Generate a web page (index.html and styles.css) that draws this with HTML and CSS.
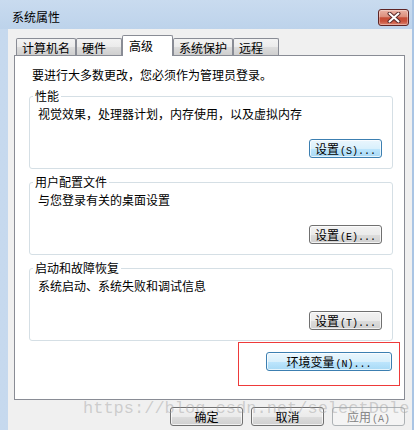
FILE: index.html
```html
<!DOCTYPE html>
<html lang="zh-CN">
<head>
<meta charset="utf-8">
<title>系统属性</title>
<link rel="stylesheet" href="styles.css">
</head>
<body>
<div class="window">
  <div class="titlebar">
    <span class="title">系统属性</span>
    <div class="close">
      <svg width="14" height="11" viewBox="0 0 14 11">
        <path d="M2.5 1.5 L11.5 9.5 M11.5 1.5 L2.5 9.5" stroke="#5a2a2a" stroke-width="4" stroke-linecap="round" fill="none"/>
        <path d="M2.5 1.5 L11.5 9.5 M11.5 1.5 L2.5 9.5" stroke="#ffffff" stroke-width="2" stroke-linecap="round" fill="none"/>
      </svg>
    </div>
  </div>
  <div class="client">
    <div class="tabs">
      <div class="tab">计算机名</div>
      <div class="tab">硬件</div>
      <div class="tab active">高级</div>
      <div class="tab">系统保护</div>
      <div class="tab">远程</div>
    </div>
    <div class="panel">
      <p class="intro">要进行大多数更改，您必须作为管理员登录。</p>
      <fieldset class="group">
        <legend>性能</legend>
        <p class="desc">视觉效果，处理器计划，内存使用，以及虚拟内存</p>
        <div class="actions"><div class="btn hot">设置<span class="lat">(S)...</span></div></div>
      </fieldset>
      <fieldset class="group">
        <legend>用户配置文件</legend>
        <p class="desc">与您登录有关的桌面设置</p>
        <div class="actions"><div class="btn">设置<span class="lat">(E)...</span></div></div>
      </fieldset>
      <fieldset class="group">
        <legend>启动和故障恢复</legend>
        <p class="desc">系统启动、系统失败和调试信息</p>
        <div class="actions"><div class="btn">设置<span class="lat">(T)...</span></div></div>
      </fieldset>
      <div class="env-row"><div class="btn hot wide">环境变量<span class="lat">(N)...</span></div></div>
      <div class="highlight"></div>
    </div>
    <div class="footer">
      <div class="btn">确定</div>
      <div class="btn">取消</div>
      <div class="btn disabled">应用<span class="lat">(A)</span></div>
    </div>
  </div>
  <div class="watermark">https://blog.csdn.net/selectDole</div>
</div>
</body>
</html>
```
FILE: styles.css
```css
* { box-sizing: border-box; }
html, body { margin: 0; padding: 0; }
body {
  width: 414px;
  height: 430px;
  overflow: hidden;
  font-family: "Noto Sans CJK SC", "Noto Sans", sans-serif;
  font-size: 12px;
  line-height: 16px;
  color: #000;
}
.window {
  position: relative;
  width: 414px;
  height: 430px;
  display: flex;
  flex-direction: column;
  padding: 0 2px 0 8px;
  background: linear-gradient(to right, #c6d9ee 0%, #bfd4ec 55%, #aac5e4 100%);
}
.titlebar {
  height: 29px;
  flex: none;
  display: flex;
  justify-content: space-between;
  align-items: flex-start;
  padding: 9px 3px 0 4px;
  margin-left: -8px;
  padding-left: 12px;
  background: linear-gradient(#c9dbef, #bdd3eb);
}
.title { line-height: 16px; }
.close {
  width: 31px;
  height: 17px;
  border: 1px solid #5e2424;
  border-radius: 3px;
  display: flex;
  align-items: center;
  justify-content: center;
  background: linear-gradient(#ebb3a6 0%, #dc8e7c 45%, #c64c36 52%, #c9523c 75%, #dc8470 100%);
  box-shadow: inset 0 0 0 1px rgba(255,255,255,0.35);
}
.client {
  flex: 1;
  background: #f0f0f0;
  display: flex;
  flex-direction: column;
  padding: 6px 7px 4px 6px;
}
.tabs {
  display: flex;
  align-items: flex-start;
  height: 21px;
  margin-bottom: -1px;
  padding-left: 2px;
  position: relative;
  z-index: 1;
}
.tab {
  margin-top: 3px;
  height: 17px;
  min-width: 46px;
  padding: 0 5px 0 5px;
  border: 1px solid #898c95;
  border-bottom: none;
  border-radius: 2px 2px 0 0;
  background: linear-gradient(#f3f3f3 0%, #ebebeb 50%, #dddddd 51%, #cfcfcf 100%);
  line-height: 17px;
  white-space: nowrap;
}
.tab.active {
  margin-top: 0;
  height: 21px;
  min-width: 51px;
  padding-left: 6px;
  background: #fff;
  line-height: 20px;
}
.panel {
  position: relative;
  flex: 1;
  background: #fff;
  border: 1px solid #898c95;
  padding: 11px 11px 0 14px;
}
.intro { margin: 0 0 5px 3px; }
.group {
  margin: 0;
  min-width: 0;
  border: 1px solid #d5dfe5;
  border-radius: 3px;
  padding: 2px 10px 10px 8px;
}
.group + .group { margin-top: 5px; }
.group legend {
  padding: 0 2px;
  margin-left: -5px;
  line-height: 16px;
}
.desc { margin: 0; }
.actions {
  margin-top: 17px;
  display: flex;
  justify-content: flex-end;
}
.btn {
  width: 73px;
  height: 19px;
  border: 1px solid #707070;
  border-radius: 3px;
  background: linear-gradient(#f2f2f2 0%, #ebebeb 50%, #dddddd 51%, #cfcfcf 100%);
  box-shadow: inset 0 0 0 1px rgba(255,255,255,0.7);
  text-align: center;
  line-height: 17px;
  white-space: nowrap;
}
.btn.hot {
  border-color: #3c7fb1;
  background: linear-gradient(#eaf6fd 0%, #d9f0fc 50%, #bee6fd 51%, #a7d9f5 100%);
}
.btn.wide { width: 126px; }
.btn.disabled {
  border-color: #adb2b5;
  background: #f4f4f4;
  box-shadow: none;
  color: #838383;
}
.lat {
  font-family: "Liberation Mono", monospace;
  font-size: 10px;
  margin-left: 1px;
}
.env-row {
  margin-top: 11px;
  display: flex;
  justify-content: flex-end;
  padding-right: 1px;
}
.highlight {
  position: absolute;
  left: 223px;
  top: 286px;
  width: 162px;
  height: 44px;
  border: 1px solid #ee3a3a;
}
.footer {
  margin-top: 7px;
  display: flex;
  justify-content: flex-end;
  gap: 8px;
}
.watermark {
  position: absolute;
  left: 83px;
  top: 399px;
  font-family: "Liberation Mono", monospace;
  font-size: 17px;
  line-height: 20px;
  color: rgba(160,160,160,0.45);
  white-space: nowrap;
  pointer-events: none;
}
```
